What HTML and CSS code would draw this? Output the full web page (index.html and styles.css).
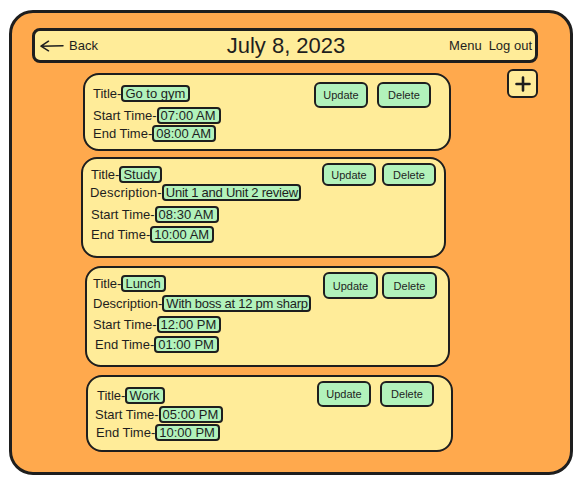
FILE: index.html
```html
<!DOCTYPE html>
<html lang="en">
<head>
<meta charset="utf-8">
<title>July 8, 2023</title>
<link rel="stylesheet" href="styles.css">
</head>
<body>
<div class="frame">
  <header class="topbar">
    <a class="back">
      <svg class="back-icon" width="24" height="12" viewBox="0 0 24 12" aria-hidden="true">
        <path d="M1 6.2 L23 5.8 M1 6.2 L8.5 1.2 M1 6.2 L8.5 10.8" fill="none" stroke="#1e1e1e" stroke-width="1.5" stroke-linecap="round"/>
      </svg>
      <span>Back</span>
    </a>
    <h1 class="date">July 8, 2023</h1>
    <nav class="nav">
      <a>Menu</a>
      <a>Log out</a>
    </nav>
  </header>

  <main class="main">
    <div class="cards">
      <section class="card card--gym">
        <div class="fields">
          <div class="field"><span class="label">Title-</span><span class="chip">Go to gym</span></div>
          <div class="field"><span class="label">Start Time-</span><span class="chip">07:00 AM</span></div>
          <div class="field"><span class="label">End Time-</span><span class="chip">08:00 AM</span></div>
        </div>
        <div class="actions">
          <button class="btn">Update</button>
          <button class="btn">Delete</button>
        </div>
      </section>

      <section class="card card--study">
        <div class="fields">
          <div class="field"><span class="label">Title-</span><span class="chip">Study</span></div>
          <div class="field"><span class="label label--wide">Description-</span><span class="chip chip--long">Unit 1 and Unit 2 review</span></div>
          <div class="field"><span class="label">Start Time-</span><span class="chip">08:30 AM</span></div>
          <div class="field"><span class="label">End Time-</span><span class="chip">10:00 AM</span></div>
        </div>
        <div class="actions">
          <button class="btn">Update</button>
          <button class="btn">Delete</button>
        </div>
      </section>

      <section class="card card--lunch">
        <div class="fields">
          <div class="field"><span class="label">Title-</span><span class="chip">Lunch</span></div>
          <div class="field"><span class="label">Description-</span><span class="chip chip--long">With boss at 12 pm sharp</span></div>
          <div class="field"><span class="label">Start Time-</span><span class="chip">12:00 PM</span></div>
          <div class="field"><span class="label">End Time-</span><span class="chip">01:00 PM</span></div>
        </div>
        <div class="actions">
          <button class="btn">Update</button>
          <button class="btn">Delete</button>
        </div>
      </section>

      <section class="card card--work">
        <div class="fields">
          <div class="field"><span class="label">Title-</span><span class="chip">Work</span></div>
          <div class="field"><span class="label">Start Time-</span><span class="chip">05:00 PM</span></div>
          <div class="field"><span class="label">End Time-</span><span class="chip">10:00 PM</span></div>
        </div>
        <div class="actions">
          <button class="btn">Update</button>
          <button class="btn">Delete</button>
        </div>
      </section>
    </div>

    <button class="add" aria-label="Add">
      <svg width="16" height="16" viewBox="0 0 16 16" aria-hidden="true">
        <path d="M8 1.5 V14.5 M1.5 8 H14.5" fill="none" stroke="#1e1e1e" stroke-width="2.6" stroke-linecap="round"/>
      </svg>
    </button>
  </main>
</div>
</body>
</html>
```
FILE: styles.css
```css
html, body {
  margin: 0;
  padding: 0;
  background: #ffffff;
}

body {
  font-family: "Liberation Sans", Arial, sans-serif;
  color: #1e1e1e;
}

.frame {
  box-sizing: border-box;
  margin: 10px 10px 0 9px;
  height: 465px;
  border: 3px solid #1e1e1e;
  border-radius: 24px;
  background: #ffa94d;
}

/* ---------- top bar ---------- */
.topbar {
  box-sizing: border-box;
  margin: 15px 32px 0 20px;
  height: 35px;
  border: 3px solid #1e1e1e;
  border-radius: 8px;
  background: #ffec99;
  display: grid;
  grid-template-columns: 1fr auto 1fr;
  align-items: center;
  padding: 0 3px 0 5px;
}

.back {
  display: flex;
  align-items: center;
  gap: 5px;
  font-size: 13px;
  justify-self: start;
}

.back-icon {
  display: block;
}

.date {
  margin: 0;
  font-size: 22px;
  font-weight: normal;
  line-height: 26px;
}

.nav {
  justify-self: end;
  display: flex;
  gap: 7px;
  font-size: 13px;
}

/* ---------- main ---------- */
.main {
  display: flex;
  justify-content: space-between;
  align-items: flex-start;
  padding-right: 32px;
}

.cards {
  display: flex;
  flex-direction: column;
  align-items: flex-start;
  margin-top: 10px;
}

.add {
  box-sizing: border-box;
  margin-top: 6px;
  width: 31px;
  height: 29px;
  padding: 0;
  border: 2px solid #1e1e1e;
  border-radius: 6px;
  background: #ffec99;
  display: flex;
  align-items: center;
  justify-content: center;
}

.add svg {
  display: block;
}

/* ---------- cards ---------- */
.card {
  box-sizing: border-box;
  border: 2px solid #1e1e1e;
  border-radius: 16px;
  background: #ffec99;
  display: flex;
  justify-content: space-between;
  align-items: flex-start;
}

.fields {
  display: flex;
  flex-direction: column;
}

.field {
  display: flex;
  align-items: center;
  height: 17px;
  font-size: 13px;
}

.label {
  white-space: nowrap;
}

.label--wide {
  letter-spacing: 0.2px;
}

.chip {
  box-sizing: border-box;
  height: 17px;
  line-height: 13px;
  padding: 0 3px 0 2px;
  border: 2px solid #1e1e1e;
  border-radius: 4px;
  background: #b2f2bb;
  white-space: nowrap;
}

.chip--long {
  letter-spacing: -0.25px;
  padding-right: 1px;
}

.actions {
  display: flex;
}

.btn {
  box-sizing: border-box;
  width: 54px;
  height: 26px;
  padding: 0;
  border: 2px solid #1e1e1e;
  border-radius: 6px;
  background: #b2f2bb;
  font-family: "Liberation Sans", Arial, sans-serif;
  font-size: 11px;
  color: #1e1e1e;
}

/* card: Go to gym */
.card--gym {
  width: 368px;
  height: 78px;
  margin-left: 71px;
  padding: 0 18px 0 8px;
}
.card--gym .fields { margin-top: 10px; gap: 1px; }
.card--gym .field:first-child { margin-bottom: 4px; }
.card--gym .actions { margin-top: 7px; gap: 9px; }

/* card: Study */
.card--study {
  width: 365px;
  height: 101px;
  margin-top: 6px;
  margin-left: 69px;
  padding: 0 8px 0 8px;
}
.card--study .fields { margin-top: 7px; gap: 1px; }
.card--study .field:nth-child(2) { margin-bottom: 4px; margin-left: -1px; }
.card--study .field:nth-child(3) { margin-bottom: 2px; }
.card--study .actions { margin-top: 4px; gap: 6px; }
.card--study .btn { height: 23px; }

/* card: Lunch */
.card--lunch {
  width: 365px;
  height: 101px;
  margin-top: 8px;
  margin-left: 73px;
  padding: 0 11px 0 6px;
}
.card--lunch .fields { margin-top: 7px; gap: 3px; }
.card--lunch .field:nth-child(2) { margin-bottom: 1px; }
.card--lunch .field:nth-child(4) { margin-left: 2px; }
.card--lunch .actions { margin-top: 4px; gap: 4px; }
.card--lunch .btn { width: 55px; height: 27px; }

/* card: Work */
.card--work {
  width: 367px;
  height: 77px;
  margin-top: 8px;
  margin-left: 74px;
  padding: 0 17px 0 7px;
}
.card--work .fields { margin-top: 10px; gap: 1px; }
.card--work .field:first-child { margin-left: 2px; margin-bottom: 1px; }
.card--work .field:nth-child(3) { margin-left: 1px; }
.card--work .actions { margin-top: 4px; gap: 9px; }
```
